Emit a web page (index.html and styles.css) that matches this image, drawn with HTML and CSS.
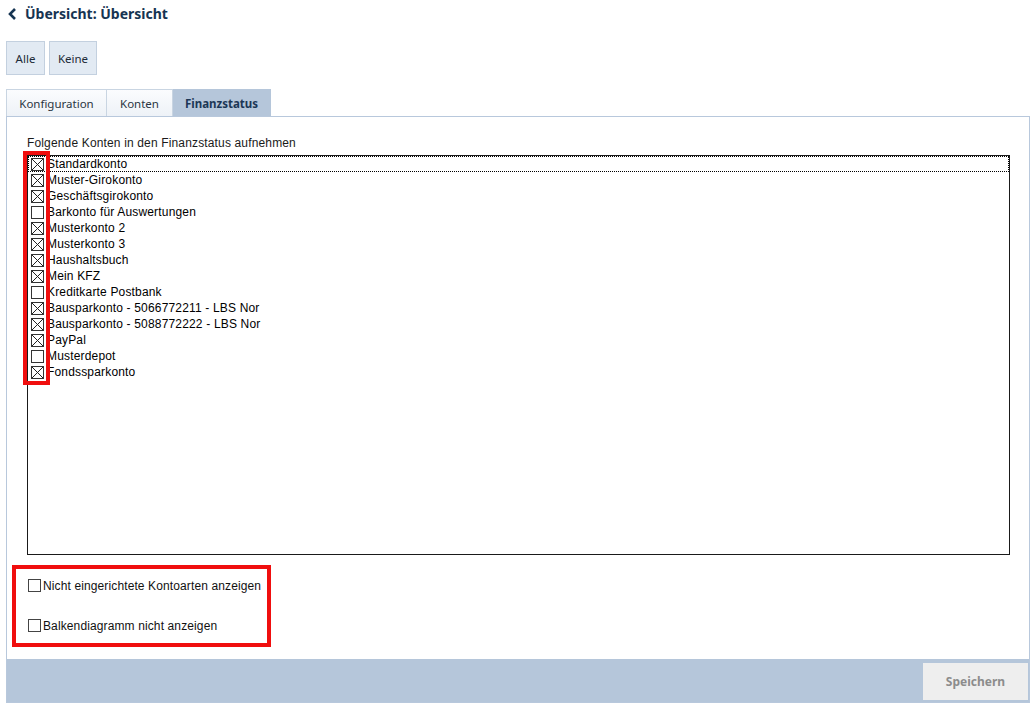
FILE: index.html
```html
<!DOCTYPE html>
<html lang="de">
<head>
<meta charset="utf-8">
<title>Übersicht</title>
<link rel="stylesheet" href="styles.css">
</head>
<body>
<div class="page">
  <header class="title">
    <svg class="back" width="9" height="12" viewBox="0 0 9 12"><path d="M7 1 L2 6 L7 11" fill="none" stroke="#163452" stroke-width="2.6" stroke-linejoin="miter"/></svg>
    <h1>Übersicht: Übersicht</h1>
  </header>

  <div class="actions">
    <button class="btn btn-all">Alle</button>
    <button class="btn btn-none">Keine</button>
  </div>

  <div class="tabs">
    <div class="tab tab-config">Konfiguration</div>
    <div class="tab tab-konten">Konten</div>
    <div class="tab tab-fin active">Finanzstatus</div>
  </div>

  <div class="panel">
    <div class="content">
      <div class="label">Folgende Konten in den Finanzstatus aufnehmen</div>
      <div class="listwrap">
        <div class="listbox">
          <div class="item focus"><span class="cb on"></span><span class="txt">Standardkonto</span></div>
          <div class="item"><span class="cb on"></span><span class="txt">Muster-Girokonto</span></div>
          <div class="item"><span class="cb on"></span><span class="txt">Geschäftsgirokonto</span></div>
          <div class="item"><span class="cb"></span><span class="txt">Barkonto für Auswertungen</span></div>
          <div class="item"><span class="cb on"></span><span class="txt">Musterkonto 2</span></div>
          <div class="item"><span class="cb on"></span><span class="txt">Musterkonto 3</span></div>
          <div class="item"><span class="cb on"></span><span class="txt">Haushaltsbuch</span></div>
          <div class="item"><span class="cb on"></span><span class="txt">Mein KFZ</span></div>
          <div class="item"><span class="cb"></span><span class="txt">Kreditkarte Postbank</span></div>
          <div class="item"><span class="cb on"></span><span class="txt">Bausparkonto - 5066772211 - LBS Nor</span></div>
          <div class="item"><span class="cb on"></span><span class="txt">Bausparkonto - 5088772222 - LBS Nor</span></div>
          <div class="item"><span class="cb on"></span><span class="txt">PayPal</span></div>
          <div class="item"><span class="cb"></span><span class="txt">Musterdepot</span></div>
          <div class="item"><span class="cb on"></span><span class="txt">Fondssparkonto</span></div>
        </div>
        <div class="mark mark-list"></div>
      </div>
      <div class="options">
        <label class="opt"><span class="cb"></span>Nicht eingerichtete Kontoarten anzeigen</label>
        <label class="opt"><span class="cb"></span>Balkendiagramm nicht anzeigen</label>
        <div class="mark mark-opts"></div>
      </div>
    </div>
    <footer class="footer">
      <button class="save">Speichern</button>
    </footer>
  </div>
</div>
</body>
</html>
```

FILE: styles.css
```css
* { box-sizing: border-box; }
html, body { margin: 0; padding: 0; background: #ffffff; }
body { width: 1034px; height: 706px; overflow: hidden; font-family: "Noto Sans", "Open Sans", sans-serif; }

.page { padding: 0 4px 0 6px; }

.title { display: flex; align-items: center; height: 27px; padding-left: 2px; }
.back { margin-right: 8px; margin-top: 1px; }
.title h1 { margin: 0; font-size: 14px; font-weight: 700; color: #163452; letter-spacing: 0; }

.actions { display: flex; gap: 4px; margin-top: 14px; }
.btn {
  height: 34px; padding: 0;
  font-family: "Noto Sans", sans-serif; font-size: 11.5px; color: #1d2a38;
  background: #e2eaf3; border: 1px solid #c3d0df; border-radius: 0;
}
.btn-all { width: 39px; }
.btn-none { width: 48px; }

.tabs { display: flex; margin-top: 14px; height: 27px; }
.tab {
  height: 27px; line-height: 27px; text-align: center;
  font-size: 11.5px; color: #2a3542;
  background: linear-gradient(#fbfcfe, #eef2f7);
  border: 1px solid #c9d5e2; border-bottom: none;
}
.tab + .tab { border-left: none; }
.tab-config { width: 101px; }
.tab-konten { width: 66px; }
.tab-fin { width: 98px; }
.tab.active { background: #b5c6da; border-color: #b5c6da; font-weight: 700; color: #1c3756; }

.panel { border: 1px solid #b8c8dc; width: 1024px; height: 587px; display: flex; flex-direction: column; }
.content { flex: 1; padding: 19px 19px 0 20px; }

.label { font-family: "Liberation Sans", Arial, sans-serif; font-size: 12px; color: #1a1a1a; line-height: 14px; letter-spacing: 0.15px; }

.listwrap { position: relative; margin-top: 5px; }
.listbox { height: 400px; border: 1px solid #1a1a1a; padding: 0; }

.item { display: flex; align-items: center; height: 16px; font-family: "Liberation Sans", Arial, sans-serif; font-size: 12px; color: #000; letter-spacing: 0.17px; }
.item.focus { outline: 1px dotted #000; outline-offset: -1px; }
.item .cb { margin-left: 3px; margin-right: 3px; }

.cb {
  display: inline-block; width: 13px; height: 13px; flex: none;
  border: 1px solid #333; background: #fff; position: relative;
}
.cb.on {
  background:
    linear-gradient(45deg, transparent calc(50% - 0.6px), #222 calc(50% - 0.6px), #222 calc(50% + 0.6px), transparent calc(50% + 0.6px)),
    linear-gradient(-45deg, transparent calc(50% - 0.6px), #222 calc(50% - 0.6px), #222 calc(50% + 0.6px), transparent calc(50% + 0.6px)),
    #fff;
}

.options { position: relative; padding-top: 24px; padding-left: 1px; display: flex; flex-direction: column; gap: 27px; }
.opt { display: flex; align-items: center; gap: 2px; height: 13px; font-family: "Liberation Sans", Arial, sans-serif; font-size: 12px; color: #111; letter-spacing: 0.12px; }
.opt .cb { border-color: #444; }

.mark { position: absolute; border: 4px solid #f00e0e; pointer-events: none; }
.mark-list { left: -4px; top: -4px; width: 27px; height: 234px; }
.mark-opts { left: -15px; top: 10px; width: 259px; height: 82px; }

.footer { height: 43px; background: #b5c6da; display: flex; justify-content: flex-end; align-items: flex-start; padding: 4px 1px 0 0; }
.save {
  width: 105px; height: 37px; border: none; background: #eeeeee;
  font-family: "Noto Sans", sans-serif; font-size: 12px; font-weight: 700; color: #8c8c8c;
}
```
